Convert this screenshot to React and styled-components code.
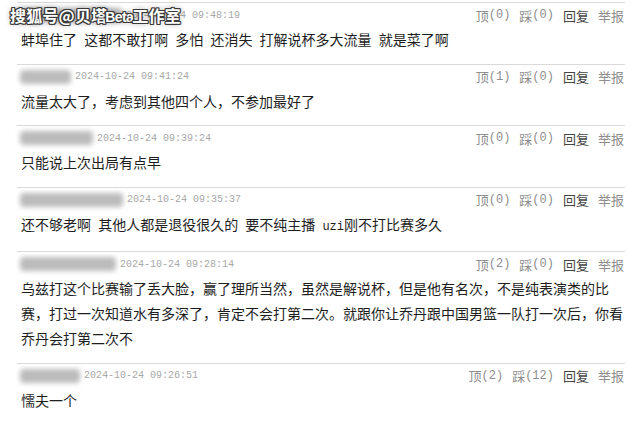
import React from "react";
import styled, { createGlobalStyle } from "styled-components";

const Global = createGlobalStyle`
  html, body { margin: 0; padding: 0; background: #fff; }
  body { font-family: "Noto Sans CJK SC", "Liberation Sans", sans-serif; }
`;

const Page = styled.div`
  position: relative;
  width: 635px;
  height: 429px;
  overflow: hidden;
  background: #fff;
  padding: 2px 10px 0 17px;
  box-sizing: border-box;
`;

const Watermark = styled.div`
  position: absolute;
  left: 10px;
  top: 5px;
  font-family: "Noto Sans CJK SC", sans-serif;
  font-weight: 700;
  font-size: 16px;
  line-height: 20px;
  letter-spacing: 0.2px;
  color: #fff;
  text-shadow: 1px 0 0 #3a3a3a, -1px 0 0 #3a3a3a, 0 1px 0 #3a3a3a, 0 -1px 0 #3a3a3a,
    1px 1px 0 #3a3a3a, -1px -1px 0 #3a3a3a, 1px -1px 0 #3a3a3a, -1px 1px 0 #3a3a3a,
    0 0 6px rgba(0, 0, 0, 0.45);
  white-space: nowrap;
  pointer-events: none;
`;

const WatermarkLatin = styled.span`
  font-family: "Liberation Sans", sans-serif;
  font-size: 14px;
  letter-spacing: -0.6px;
  margin: 0 -1px 0 -2px;
`;

const Row = styled.div`
  border-top: 1px solid #dadada;
  padding: 0 1px 11.5px 3px;
`;

const Header = styled.div`
  display: flex;
  align-items: center;
  justify-content: space-between;
  height: 24px;
`;

const Meta = styled.div`
  display: flex;
  align-items: center;
`;

const NameBlur = styled.span`
  display: inline-block;
  height: 14px;
  border-radius: 4px;
  background: #bcbcbc;
  filter: blur(2.5px);
  margin-right: 4px;
`;

const Time = styled.span`
  font-family: "Liberation Mono", monospace;
  font-size: 10px;
  color: #a8a8a8;
  white-space: nowrap;
`;

const Actions = styled.div`
  display: flex;
  align-items: center;
  gap: 9px;
  font-size: 13px;
  color: #8a8a8a;
  white-space: nowrap;
`;

const Action = styled.span`
  display: inline-flex;
  align-items: center;
  color: ${(p) => (p.$strong ? "#444" : "#8e8e8e")};
`;

const Count = styled.span`
  font-family: "Liberation Mono", monospace;
  font-size: 12px;
`;

const Content = styled.div`
  padding-left: 1px;
  font-size: 14px;
  line-height: 25px;
  color: #1e1e1e;
  word-spacing: 4px;
`;

const Latin = styled.span`
  font-family: "Liberation Mono", monospace;
  font-size: 12px;
  word-spacing: 0;
`;

const comments = [
  {
    name: 102,
    time: "2024-10-24 09:48:19",
    up: 0,
    down: 0,
    text: "蚌埠住了 这都不敢打啊 多怕 还消失 打解说杯多大流量 就是菜了啊",
  },
  {
    name: 51,
    time: "2024-10-24 09:41:24",
    up: 1,
    down: 0,
    text: "流量太大了，考虑到其他四个人，不参加最好了",
  },
  {
    name: 73,
    time: "2024-10-24 09:39:24",
    up: 0,
    down: 0,
    text: "只能说上次出局有点早",
  },
  {
    name: 103,
    time: "2024-10-24 09:35:37",
    up: 0,
    down: 0,
    text: (
      <>
        还不够老啊 其他人都是退役很久的 要不纯主播 <Latin>uzi</Latin>刚不打比赛多久
      </>
    ),
  },
  {
    name: 96,
    time: "2024-10-24 09:28:14",
    up: 2,
    down: 0,
    text: "乌兹打这个比赛输了丢大脸，赢了理所当然，虽然是解说杯，但是他有名次，不是纯表演类的比赛，打过一次知道水有多深了，肯定不会打第二次。就跟你让乔丹跟中国男篮一队打一次后，你看乔丹会打第二次不",
  },
  {
    name: 60,
    time: "2024-10-24 09:26:51",
    up: 2,
    down: 12,
    text: "懦夫一个",
  },
];

export default function App() {
  return (
    <>
      <Global />
      <Page>
        {comments.map((c, i) => (
          <Row key={i}>
            <Header>
              <Meta>
                <NameBlur style={{ width: c.name }} />
                <Time>{c.time}</Time>
              </Meta>
              <Actions>
                <Action>
                  顶<Count>({c.up})</Count>
                </Action>
                <Action>
                  踩<Count>({c.down})</Count>
                </Action>
                <Action $strong>回复</Action>
                <Action>举报</Action>
              </Actions>
            </Header>
            <Content>{c.text}</Content>
          </Row>
        ))}
        <Watermark>
          搜狐号@贝塔<WatermarkLatin>Beta</WatermarkLatin>工作室
        </Watermark>
      </Page>
    </>
  );
}
